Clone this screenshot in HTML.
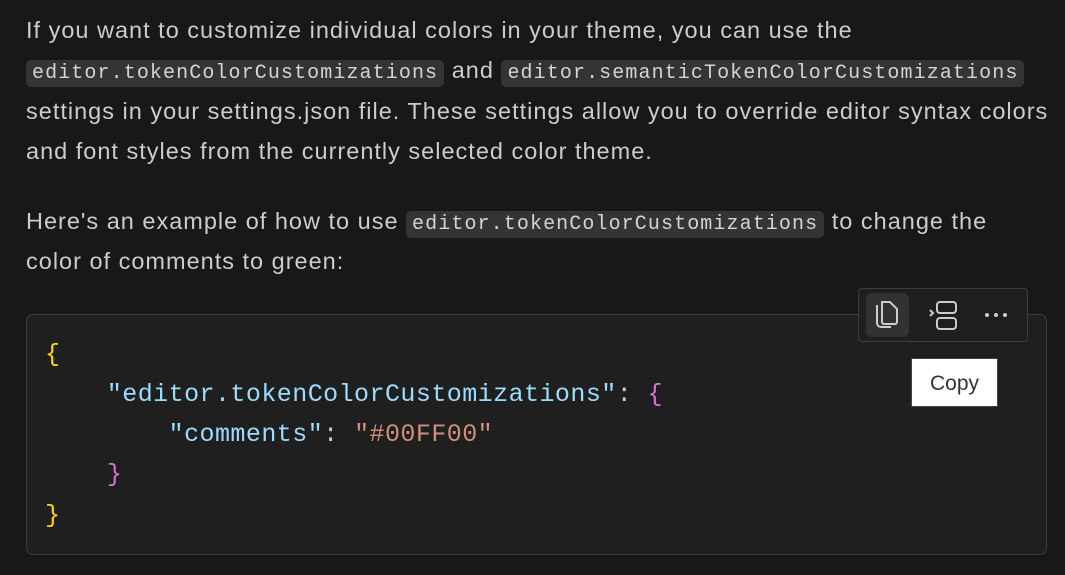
<!DOCTYPE html>
<html><head><meta charset="utf-8"><style>
html,body{margin:0;padding:0;background:#181818;width:1065px;height:575px;overflow:hidden;position:relative}
body{font-family:"Liberation Sans",sans-serif;color:#cccccc;font-size:23.5px;letter-spacing:1px}
.l{position:absolute;left:26px;white-space:nowrap;line-height:30px}
code{font-family:"Liberation Mono",monospace;font-size:20px;background:#343434;border-radius:5px;padding:2px 6px;color:#d4d4d4;letter-spacing:1.1px}
.block{position:absolute;left:26px;top:314px;width:1019px;height:239px;background:#1f1f1f;border:1.5px solid #3c3c3c;border-radius:7px}
.c{position:absolute;left:45px;font-family:"Liberation Mono",monospace;font-size:25px;white-space:pre;line-height:30px;color:#cccccc;letter-spacing:0.45px}
.k{color:#9cdcfe}.s{color:#ce9178}.y{color:#ffd700}.p{color:#da70d6}
.tb{position:absolute;left:858px;top:288px;width:168px;height:52px;background:#1f1f1f;border:1.5px solid #3c3c3c;border-radius:4px}
.hl{position:absolute;left:866px;top:293px;width:43px;height:44px;background:#313232;border-radius:6px}
.tip{position:absolute;left:911px;top:358px;width:85px;height:47px;background:#fff;border:1.5px solid #454545;color:#333;font-size:21px;letter-spacing:0;text-align:center;line-height:50px}
</style></head><body>
<div class="l" style="top:15px">If you want to customize individual colors in your theme, you can use the</div>
<div class="l" style="top:55px"><code>editor.tokenColorCustomizations</code> and <code>editor.semanticTokenColorCustomizations</code></div>
<div class="l" style="top:96px">settings in your settings.json file. These settings allow you to override editor syntax colors</div>
<div class="l" style="top:136px">and font styles from the currently selected color theme.</div>
<div class="l" style="top:206px">Here's an example of how to use <code>editor.tokenColorCustomizations</code> to change the</div>
<div class="l" style="top:246px">color of comments to green:</div>
<div class="block"></div>
<div class="c" style="top:340px"><span class="y">{</span></div>
<div class="c" style="top:380px">    <span class="k">"editor.tokenColorCustomizations"</span>: <span class="p">{</span></div>
<div class="c" style="top:420px">        <span class="k">"comments"</span>: <span class="s">"#00FF00"</span></div>
<div class="c" style="top:460px">    <span class="p">}</span></div>
<div class="c" style="top:501px"><span class="y">}</span></div>
<div class="tb"></div>
<div class="hl"></div>
<svg style="position:absolute;left:866px;top:293px" width="43" height="44" viewBox="0 0 43 44" fill="none" stroke="#cccccc" stroke-width="2">
<path d="M11 12 v18 a4 4 0 0 0 4 4 h10"/>
<path d="M16 9 h8 l7 7 v13 a2 2 0 0 1 -2 2 h-11 a2 2 0 0 1 -2 -2 z"/>
</svg>
<svg style="position:absolute;left:925px;top:296px" width="36" height="40" viewBox="0 0 36 40" fill="none" stroke="#cccccc" stroke-width="2">
<path d="M5 14 l3 3 l-3 3"/>
<rect x="12" y="6" width="19" height="11" rx="3"/>
<rect x="12" y="22" width="19" height="11" rx="3"/>
</svg>
<svg style="position:absolute;left:982px;top:308px" width="30" height="14" viewBox="0 0 30 14" fill="#cccccc">
<circle cx="5" cy="7" r="2"/><circle cx="14" cy="7" r="2"/><circle cx="23" cy="7" r="2"/>
</svg>
<div class="tip">Copy</div>
</body></html>
